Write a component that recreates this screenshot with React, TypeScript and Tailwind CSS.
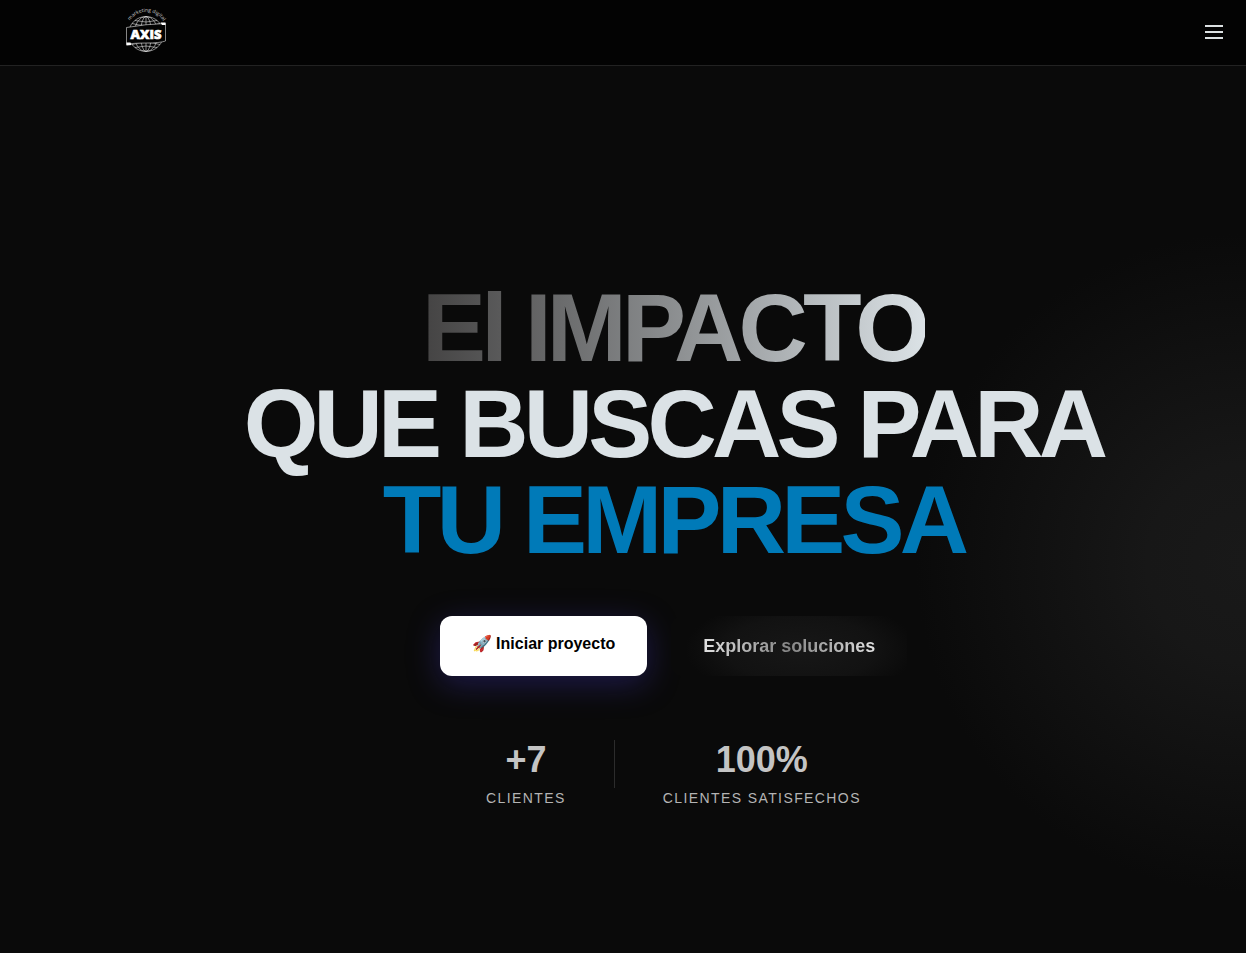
import React from "react";

const stats = [
  { value: "+7", label: "Clientes" },
  { value: "100%", label: "Clientes satisfechos" },
];

function Logo() {
  return (
    <svg viewBox="0 0 44 44" className="size-11 overflow-visible" fill="none" stroke="#e0e0e0" strokeWidth="0.6" role="img" aria-label="Axis">
      <defs>
        <path id="tagline" d="M4 14 A20 20 0 0 1 41 14.500" />
      </defs>
      <circle cx="22" cy="24" r="17.5" />
      <ellipse cx="22" cy="24" rx="12" ry="17.5" />
      <ellipse cx="22" cy="24" rx="5.5" ry="17.5" />
      <path d="M22 6.500V41.500M8 13.500Q22 17.500 36 13.500M11 10.500Q22 13.500 33 10.500M8 34.500Q22 30.500 36 34.500M11 37.500Q22 34.500 33 37.500" />
      <path d="M2.500 17.500Q22 14 41.500 13.500V31Q36 33 22 33Q8 33 2.500 34.500Z" fill="#030303" />
      <path d="M36.500 12.500L41.500 12.500V15L38 15ZM2.500 32.500L6.500 32.500L7.500 35L2.500 35.500Z" fill="#fff" stroke="none" />
      <text x="22" y="28.500" textAnchor="middle" className="font-['Open_Sans',sans-serif] text-[13px] font-extrabold" fill="#fff" stroke="#fff">
        AXIS
      </text>
      <text className="font-['Open_Sans',sans-serif] text-[5px]" fill="#cfcfcf" stroke="none">
        <textPath href="#tagline" startOffset="50%" textAnchor="middle">marketing digital</textPath>
      </text>
    </svg>
  );
}

export default function App() {
  return (
    <div className="flex min-h-screen flex-col bg-[#0a0a0a] font-['Liberation_Sans',Arial,sans-serif] text-[#dbe2e6]">
      <header className="flex h-[66px] items-center justify-between border-b border-[#222222] bg-[#030303] pr-5 pb-0.5 pl-31">
        <a href="#inicio">
          <Logo />
        </a>
        <button type="button" aria-label="Abrir menú">
          <svg viewBox="0 0 24 24" className="size-6" stroke="#dbe0e2" strokeWidth="2">
            <path d="M3 6h18M3 12h18M3 18h18" />
          </svg>
        </button>
      </header>

      <main
        id="inicio"
        className="flex flex-1 flex-col items-center justify-center bg-[radial-gradient(circle_330px_at_100%_56%,#191919_0%,#171717_30%,#101010_68%,#0a0a0a_100%)] pt-17 pl-[101px] text-center"
      >
        <h1 className="text-[96px] leading-none font-bold tracking-tighter">
          <span className="inline-block bg-linear-to-r from-[#444343] to-[#dbe2e6] bg-clip-text text-transparent">El IMPACTO</span>
          <span className="block">QUE BUSCAS PARA</span>
          <span className="block text-[#007ab8]">TU EMPRESA</span>
        </h1>

        <div className="mt-12 flex flex-wrap justify-center gap-6">
          <a
            href="#proyecto"
            className="h-15 rounded-xl bg-white px-8 pt-4 text-base font-bold text-black shadow-[0_8px_32px_rgba(60,50,170,0.4)]"
          >
            🚀 Iniciar proyecto
          </a>
          <a
            href="#soluciones"
            className="flex h-15 items-center rounded-xl bg-[radial-gradient(ellipse_70%_120%_at_55%_55%,#171717_0%,#121212_45%,#0a0a0a_70%)] px-8 text-lg font-bold"
          >
            <span className="bg-linear-to-r from-[#e2e2e2] via-[#858585] to-[#e2e2e2] bg-clip-text text-transparent">Explorar soluciones</span>
          </a>
        </div>

        <dl className="mt-16 flex gap-12">
          {stats.map((stat, index) => (
            <React.Fragment key={stat.label}>
              {index > 0 && <div aria-hidden="true" className="h-12 w-px bg-[#2c2c2c]" />}
              <div className="flex flex-col-reverse gap-2">
                <dt className="text-sm tracking-widest text-[#b4b4b4] uppercase">{stat.label}</dt>
                <dd className="text-4xl font-bold text-[#c4c4c4]">{stat.value}</dd>
              </div>
            </React.Fragment>
          ))}
        </dl>
      </main>
    </div>
  );
}
